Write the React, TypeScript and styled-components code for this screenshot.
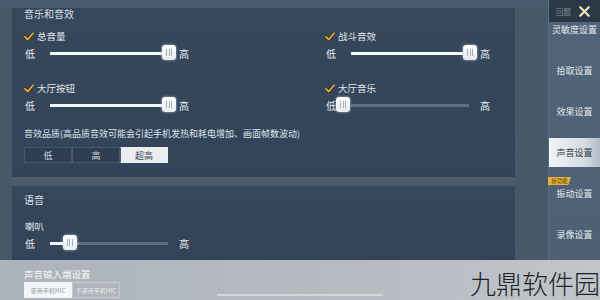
import React from 'react';
import styled, { createGlobalStyle } from 'styled-components';
import { X } from 'lucide-react';

const GlobalStyle = createGlobalStyle`
   html, body {
      margin: 0;
      padding: 0;
      width: 600px;
      height: 300px;
      overflow: hidden;
      background: #3e4f62;
      font-family: "Noto Sans CJK SC", "Noto Sans", sans-serif;
   }
`;

type SliderPropsType = {
   value: number;
};

const Slider = (props: SliderPropsType) => {
   const thumbLeft = -15 + props.value * 127;
   return (
      <SliderRow>
         <SliderLabel>低</SliderLabel>
         <TrackArea>
            <Track>
               <TrackFill style={{ width: Math.max(0, thumbLeft + 7) }} />
            </Track>
            <Thumb style={{ left: thumbLeft }}>
               <Grip />
               <Grip />
               <Grip />
            </Thumb>
         </TrackArea>
         <SliderLabel>高</SliderLabel>
      </SliderRow>
   );
};

const Check = () => (
   <svg width="10" height="9" viewBox="0 0 10 9">
      <path d="M1 4.8 L3.8 7.5 L9 1.2" fill="none" stroke="#2a2418" strokeWidth="3" strokeLinecap="round" strokeLinejoin="round" />
      <path d="M1 4.8 L3.8 7.5 L9 1.2" fill="none" stroke="#e9ad3c" strokeWidth="1.8" strokeLinecap="round" strokeLinejoin="round" />
   </svg>
);

type SoundItemPropsType = {
   label: string;
   value: number;
};

const SoundItem = (props: SoundItemPropsType) => (
   <Item>
      <CheckLabel>
         <Check />
         {props.label}
      </CheckLabel>
      <Slider value={props.value} />
   </Item>
);

const menu = ['灵敏度设置', '拾取设置', '效果设置', '声音设置', '振动设置', '录像设置'];

export default function App() {
   return (
      <>
         <GlobalStyle />
         <Page>
            <Main>
               <Content>
                  <TopStrip />
                  <Panel>
                     <SectionTitle>音乐和音效</SectionTitle>
                     <ItemGrid>
                        <SoundItem label="总音量" value={1} />
                        <SoundItem label="战斗音效" value={1} />
                        <SoundItem label="大厅按钮" value={1} />
                        <SoundItem label="大厅音乐" value={0} />
                     </ItemGrid>
                     <QualityText>音效品质(高品质音效可能会引起手机发热和耗电增加、画面帧数波动)</QualityText>
                     <Segmented>
                        <Segment>低</Segment>
                        <Segment>高</Segment>
                        <Segment $active>超高</Segment>
                     </Segmented>
                  </Panel>
                  <Band />
                  <Panel $second>
                     <SectionTitle $second>语音</SectionTitle>
                     <Item>
                        <PlainLabel>喇叭</PlainLabel>
                        <Slider value={0.22} />
                     </Item>
                  </Panel>
               </Content>
               <Sidebar>
                  <SideHeader>
                     <HeaderText>回题</HeaderText>
                     <X size={17} color="#f1e8bd" strokeWidth={3} />
                  </SideHeader>
                  {menu.map((m) => (
                     <MenuItem key={m}>
                        {m === '振动设置' && <Badge>新功能</Badge>}
                        <MenuText $active={m === '声音设置'}>{m}</MenuText>
                     </MenuItem>
                  ))}
               </Sidebar>
            </Main>
            <Bottom>
               <BottomLeft>
                  <BottomTitle>声音输入端设置</BottomTitle>
                  <MicRow>
                     <MicButton $active>使用手机MIC</MicButton>
                     <MicButton>不使用手机MIC</MicButton>
                     <FaintTrack />
                  </MicRow>
               </BottomLeft>
               <Watermark>九鼎软件园</Watermark>
            </Bottom>
         </Page>
      </>
   );
}

const Page = styled.div`
   width: 600px;
   height: 300px;
   display: flex;
   flex-direction: column;
   background: linear-gradient(90deg, #3c4c5e 0%, #41536a 100%);
   overflow: hidden;
`;

const Main = styled.div`
   display: flex;
   height: 260px;
`;

const Content = styled.div`
   width: 548px;
   display: flex;
   flex-direction: column;
   background: #475869;
`;

const TopStrip = styled.div`
   height: 8px;
   background: #4a5b6d;
`;

const Panel = styled.div<{ $second?: boolean }>`
   margin-left: 12px;
   width: 503px;
   height: ${(p) => (p.$second ? '74px' : '169px')};
   background: linear-gradient(180deg, #36475a 0%, #33445a 100%);
   padding: 0 0 0 12px;
   box-sizing: border-box;
   color: #dde3e9;
   display: flex;
   flex-direction: column;
`;

const Band = styled.div`
   height: 9px;
   margin-left: 12px;
   width: 503px;
   background: #4b5b6c;
`;

const SectionTitle = styled.div<{ $second?: boolean }>`
   font-size: 10px;
   line-height: 12px;
   margin-top: ${(p) => (p.$second ? '8px' : '0')};
   color: #d9dfe6;
`;

const ItemGrid = styled.div`
   display: grid;
   grid-template-columns: 301px 1fr;
   row-gap: 21px;
   margin-top: 10px;
`;

const Item = styled.div`
   display: flex;
   flex-direction: column;
`;

const CheckLabel = styled.div`
   display: flex;
   align-items: center;
   gap: 3px;
   font-size: 9.5px;
   line-height: 12px;
   color: #e4e9ee;
`;

const PlainLabel = styled.div`
   font-size: 9.5px;
   line-height: 12px;
   margin-top: 14px;
   margin-left: 1px;
   color: #e4e9ee;
`;

const SliderRow = styled.div`
   display: flex;
   align-items: center;
   height: 16px;
   margin-top: 3px;
`;

const SliderLabel = styled.div`
   font-size: 10px;
   color: #e8ecf0;
   width: 11px;
   margin-left: 1px;
`;

const TrackArea = styled.div`
   position: relative;
   width: 118px;
   height: 16px;
   margin: 0 10px 0 14px;
   display: flex;
   align-items: center;
`;

const Track = styled.div`
   width: 100%;
   height: 3px;
   background: #5f6f80;
   position: relative;
`;

const TrackFill = styled.div`
   position: absolute;
   left: 0;
   top: 0;
   height: 3px;
   max-width: 100%;
   background: #f4f6f8;
`;

const Thumb = styled.div`
   position: absolute;
   top: 0;
   width: 14px;
   height: 15px;
   border-radius: 3px;
   background: linear-gradient(180deg, #ffffff 0%, #e6ebf0 100%);
   box-shadow: 0 0 3px rgba(220, 230, 240, 0.7);
   display: flex;
   align-items: center;
   justify-content: center;
   gap: 1.5px;
`;

const Grip = styled.div`
   width: 1px;
   height: 7px;
   background: #a5afba;
`;

const QualityText = styled.div`
   font-size: 9px;
   line-height: 11px;
   margin-top: 15px;
   color: #dfe4ea;
   white-space: nowrap;
`;

const Segmented = styled.div`
   display: flex;
   margin-top: 8px;
   width: 145px;
`;

const Segment = styled.div<{ $active?: boolean }>`
   width: 48px;
   height: 16px;
   box-sizing: border-box;
   display: flex;
   align-items: center;
   justify-content: center;
   font-size: 9px;
   color: ${(p) => (p.$active ? '#3a4656' : '#cfd6dd')};
   background: ${(p) => (p.$active ? '#e9edf0' : '#2f3f51')};
   border: 1px solid ${(p) => (p.$active ? '#e9edf0' : '#465769')};
   & + & {
      border-left: 1px solid #4c5d6f;
   }
`;

const Sidebar = styled.div`
   position: relative;
   width: 52px;
   box-sizing: border-box;
   padding-top: 9px;
   background: linear-gradient(180deg, #52647a 0%, #4f6075 100%);
   border-left: 1px solid #5c6d80;
   display: flex;
   flex-direction: column;
`;

const SideHeader = styled.div`
   position: absolute;
   top: 0;
   left: 0;
   right: 0;
   height: 22px;
   background: #2b3846;
   display: flex;
   align-items: center;
   justify-content: space-between;
   padding: 0 7px 0 7px;
   box-sizing: border-box;
   z-index: 2;
`;

const HeaderText = styled.span`
   font-size: 7.5px;
   color: #7e8a96;
`;

const MenuItem = styled.div`
   position: relative;
   height: 41px;
   flex-shrink: 0;
   display: flex;
   align-items: center;
   justify-content: center;
   padding: 6px 0;
   box-sizing: border-box;
`;

const MenuText = styled.div<{ $active?: boolean }>`
   width: 100%;
   height: 100%;
   display: flex;
   align-items: center;
   justify-content: center;
   font-size: 9px;
   white-space: nowrap;
   color: ${(p) => (p.$active ? '#2f3a46' : '#e2e8ee')};
   background: ${(p) =>
      p.$active ? 'linear-gradient(90deg, #f2f4f6 0%, #d5dbe1 70%, #b3bec9 100%)' : 'transparent'};
`;

const Badge = styled.div`
   position: absolute;
   left: -1px;
   top: 4px;
   width: 23px;
   height: 8px;
   background: #e3b23a;
   color: #5a3a08;
   font-size: 5.5px;
   line-height: 8px;
   text-align: center;
   clip-path: polygon(0 0, 100% 0, 88% 100%, 0 100%);
`;

const Bottom = styled.div`
   height: 40px;
   display: flex;
   justify-content: space-between;
   background: linear-gradient(90deg, #acb3ba 0%, #b6bcc2 60%, #c0c5ca 100%);
`;

const BottomLeft = styled.div`
   padding-left: 24px;
   display: flex;
   flex-direction: column;
`;

const BottomTitle = styled.div`
   font-size: 9.5px;
   line-height: 12px;
   margin-top: 8px;
   color: #f2f4f6;
`;

const MicRow = styled.div`
   display: flex;
   align-items: center;
   margin-top: 2px;
`;

const MicButton = styled.div<{ $active?: boolean }>`
   width: 48px;
   height: 16px;
   box-sizing: border-box;
   display: flex;
   align-items: center;
   justify-content: center;
   font-size: 6px;
   white-space: nowrap;
   color: ${(p) => (p.$active ? '#9aa3ad' : '#e7eaed')};
   background: ${(p) => (p.$active ? '#f4f5f6' : 'transparent')};
   border: 1px solid ${(p) => (p.$active ? '#f4f5f6' : '#c5cbd1')};
`;

const FaintTrack = styled.div`
   width: 166px;
   height: 2px;
   margin: 10px 0 0 97px;
   background: #d2d7dc;
`;

const Watermark = styled.div`
   font-size: 26px;
   font-weight: 300;
   line-height: 30px;
   margin-top: 8px;
   color: #1f2226;
   white-space: nowrap;
`;
